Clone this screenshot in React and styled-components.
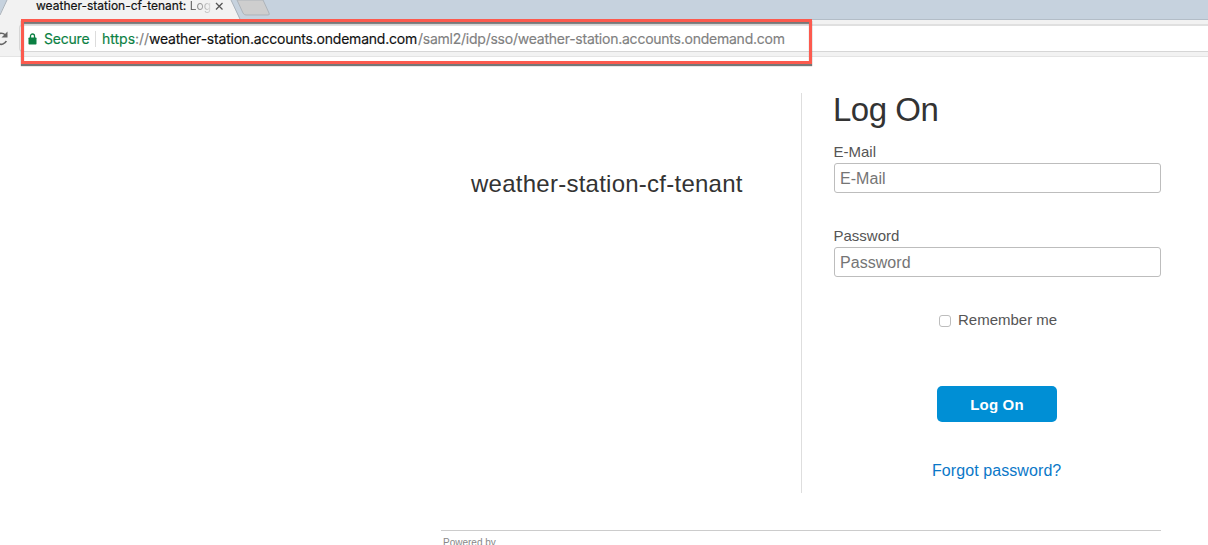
import React from "react";
import styled, { createGlobalStyle } from "styled-components";

const Global = createGlobalStyle`
  *, *::before, *::after { box-sizing: border-box; }
  body { margin: 0; background: #fff; overflow: hidden; }
`;

const Window = styled.div`
  position: relative;
  width: 1208px;
  height: 545px;
  overflow: hidden;
  background: #fff;
  font-family: "Liberation Sans", Arial, sans-serif;
`;

const TabStrip = styled.div`
  position: relative;
  height: 20px;
  background: #c6d2de;
  border-bottom: 1px solid #b3bdc7;
`;

const TabShapes = styled.svg`
  position: absolute;
  left: 0;
  top: 0;
`;

const TabLabel = styled.div`
  position: absolute;
  left: 36px;
  top: -3px;
  width: 190px;
  display: flex;
  align-items: center;
  font: 12px/18px Inter, sans-serif;
  -webkit-text-stroke: 0.2px #111;
  color: #111;
  white-space: pre;
`;

const Fading = styled.span`
  background: linear-gradient(90deg, #555, #ddd);
  background-clip: text;
  color: transparent;
  -webkit-text-stroke: 0;
`;

const Toolbar = styled.div`
  height: 37px;
  padding-top: 4px;
  display: flex;
  background: #f2f2f2;
  border-bottom: 1px solid #e4e4e4;
`;

const Reload = styled.svg`
  width: 19px;
  height: 28px;
  flex: none;
`;

const AddressBar = styled.div`
  flex: 1;
  height: 28px;
  display: flex;
  align-items: center;
  padding-left: 8px;
  background: #fff;
  border: 1px solid #d6d6d6;
  border-top: 2px solid #e0e0e0;
  border-right: 0;
  border-radius: 4px 0 0 4px;
  font: 14px/24px Inter, sans-serif;
  white-space: pre;
`;

const Lock = styled.svg`
  width: 9px;
  height: 12px;
  margin-right: 7px;
`;

const UrlPart = styled.span`
  color: ${(p) => p.$color};
  letter-spacing: ${(p) => p.$track || 0}px;
  width: ${(p) => p.$w}px;
  flex: none;
  -webkit-text-stroke: 0.15px ${(p) => p.$color};
`;

const Separator = styled.span`
  width: 1px;
  height: 16px;
  margin: 0 6px;
  background: #dcdcdc;
`;

const Highlight = styled.div`
  position: absolute;
  left: 21px;
  top: 19px;
  width: 791px;
  height: 45px;
  border: 3px solid #fc5a4e;
  box-shadow: 0 2px 1px #777, inset 0 2px 1px #777;
`;

const Page = styled.main`
  width: 720px;
  margin-left: 441px;
  padding-top: 36px;
`;

const Columns = styled.div`
  height: 400px;
  display: flex;
`;

const Brand = styled.div`
  width: 361px;
  flex: none;
  padding: 77px 0 0 30px;
  border-right: 1px solid #dedede;
  font-size: 24px;
  line-height: 28px;
  letter-spacing: 0.25px;
  color: #333;
  white-space: nowrap;
`;

const Form = styled.form`
  width: 359px;
  padding-left: 32px;
  display: flex;
  flex-direction: column;
`;

const Title = styled.h1`
  margin: -2px 0 0 -1px;
  height: 53px;
  font-size: 33px;
  font-weight: 400;
  line-height: 38px;
  letter-spacing: -0.5px;
  color: #333;
`;

const Label = styled.label`
  height: 19px;
  margin-left: -0.5px;
  font-size: 15px;
  line-height: 16px;
  color: #555;
`;

const Input = styled.input`
  width: 327px;
  height: 30px;
  margin-bottom: 35px;
  padding: 1px 5px 0;
  border: 1px solid #bdbdbd;
  border-radius: 3px;
  outline: 0;
  font: 16px "Liberation Sans", Arial, sans-serif;
  letter-spacing: 0.05px;
  &::placeholder { color: #757575; opacity: 1; }
`;

const Remember = styled.label`
  height: 18px;
  margin-top: -2px;
  display: flex;
  align-items: center;
  padding-left: 105px;
  font-size: 15px;
  color: #555;
`;

const Check = styled.input`
  appearance: none;
  width: 12px;
  height: 12px;
  margin: 3px 7px 0 0;
  border: 1px solid #bdbdbd;
  border-radius: 3px;
`;

const Submit = styled.button`
  width: 120px;
  height: 36px;
  margin: 58px 0 0 103px;
  padding: 1px 0 0;
  border: 0;
  border-radius: 5px;
  background: #008fd5;
  color: #fff;
  font: bold 15px "Liberation Sans", Arial, sans-serif;
  letter-spacing: 0.2px;
`;

const Forgot = styled.a`
  margin: 39px 0 0 98px;
  font-size: 16px;
  line-height: 20px;
  letter-spacing: 0.08px;
  color: #0a78c8;
  white-space: nowrap;
`;

const Footer = styled.footer`
  margin-top: 37px;
  padding: 6px 2px;
  border-top: 1px solid #ccc;
  font-size: 10px;
  line-height: 12px;
  color: #888;
`;

export default function App() {
  return (
    <Window>
      <Global />
      <TabStrip>
        <TabShapes width="280" height="20" viewBox="0 0 280 20">
          <path d="M0 20 V14 L7 0 H231 L240 20 Z" fill="#f2f2f2" />
          <path d="M0 15 L7 0 M231 0 L240 19" fill="none" stroke="#aab2ba" />
          <path d="M237 0 L243 13 Q244 15 246 15 H268 Q270 15 269 13 L263 0 Z" fill="#cecece" stroke="#adb3b9" />
          <path d="M216 3 L222.500 9.500 M222.500 3 L216 9.500" stroke="#555" strokeWidth="1.3" />
        </TabShapes>
        <TabLabel>
          weather-station-cf-tenant: <Fading>Log</Fading>
        </TabLabel>
      </TabStrip>
      <Toolbar>
        <Reload viewBox="0 0 19 28">
          <path d="M5.300 11 A5.500 5.500 0 1 0 6.300 17" fill="none" stroke="#666" strokeWidth="1.7" />
          <path d="M7.500 7.500 V13.500 H1.500 Z" fill="#666" />
        </Reload>
        <AddressBar>
          <Lock viewBox="0 0 9 12">
            <path d="M2.500 6 V3 A2 2 0 0 1 6.500 3 V6" fill="none" stroke="#0b8043" strokeWidth="1.3" />
            <rect x="0.500" y="4.500" width="8" height="7" rx="0.700" fill="#0b8043" />
          </Lock>
          <UrlPart $color="#0b8043" $w={45} $track={-0.2}>Secure</UrlPart>
          <Separator />
          <UrlPart $color="#0b8043" $w={33}>https</UrlPart>
          <UrlPart $color="#808080" $w={14}>://</UrlPart>
          <UrlPart $color="#111" $w={269} $track={-0.21}>weather-station.accounts.ondemand.com</UrlPart>
          <UrlPart $color="#808080" $w={368} $track={-0.24}>/saml2/idp/sso/weather-station.accounts.ondemand.com</UrlPart>
        </AddressBar>
      </Toolbar>
      <Page>
        <Columns>
          <Brand>weather-station-cf-tenant</Brand>
          <Form>
            <Title>Log On</Title>
            <Label htmlFor="email">E-Mail</Label>
            <Input id="email" type="email" placeholder="E-Mail" />
            <Label htmlFor="password">Password</Label>
            <Input id="password" type="password" placeholder="Password" />
            <Remember>
              <Check type="checkbox" />
              Remember me
            </Remember>
            <Submit type="button">Log On</Submit>
            <Forgot>Forgot password?</Forgot>
          </Form>
        </Columns>
        <Footer>Powered by</Footer>
      </Page>
      <Highlight />
    </Window>
  );
}
